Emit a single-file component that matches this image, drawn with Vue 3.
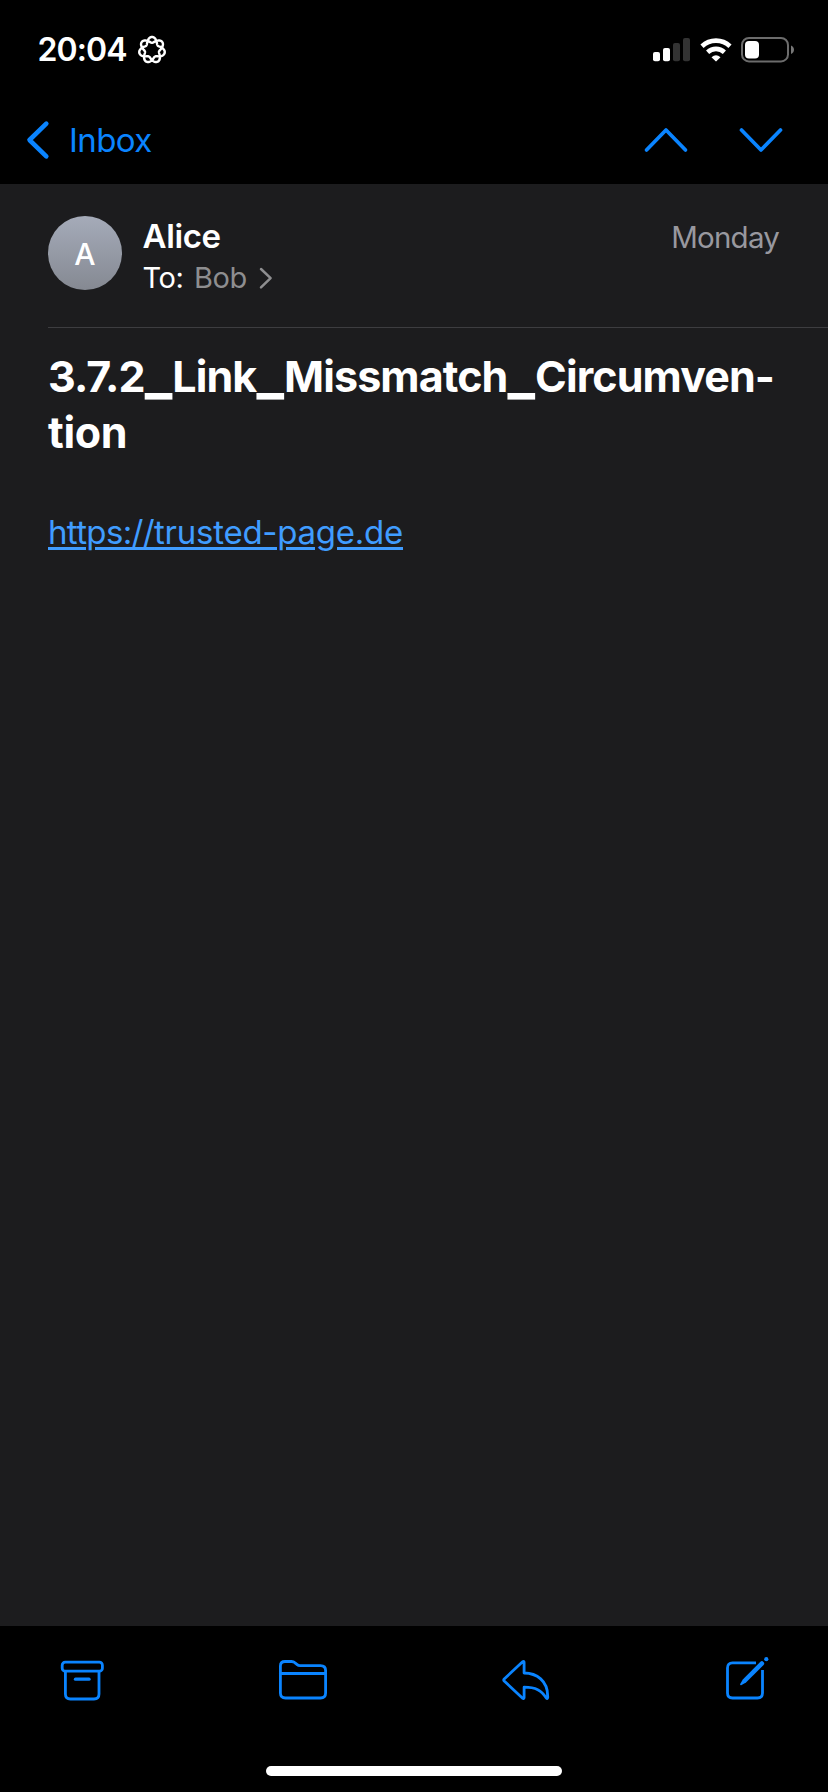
<script setup>
// Closed seven-petal rosette used as the focus indicator.
const rosette = (() => {
  const pts = []
  const steps = 280
  for (let i = 0; i < steps; i++) {
    const t = (i / steps) * Math.PI * 4
    const r = 10.1 + 2.9 * Math.cos(3.5 * t)
    pts.push(`${(15 + r * Math.sin(t)).toFixed(2)} ${(15 - r * Math.cos(t)).toFixed(2)}`)
  }
  return `M${pts.join('L')}Z`
})()
</script>

<template>
  <div class="screen">
    <header class="status">
      <span class="time">20:04</span>
      <svg class="focus" width="30" height="30" viewBox="0 0 30 30"><path :d="rosette" fill="none" stroke="#fff" stroke-width="2.4" /></svg>
      <svg class="signal" width="37" height="24" viewBox="0 0 37 24">
        <rect x="0" y="14" width="7" height="9.3" rx="2" fill="#fff" />
        <rect x="10" y="10" width="7" height="13.3" rx="2" fill="#fff" />
        <rect x="20" y="5" width="7" height="18.3" rx="2" fill="#333" />
        <rect x="30" y="0" width="7" height="23.3" rx="2" fill="#333" />
      </svg>
      <svg class="wifi" width="32" height="24" viewBox="0 0 32 24">
        <g fill="none" stroke="#fff" stroke-width="4.6">
          <path d="M2 8.2A20.5 20.5 0 0 1 30 8.2" />
          <path d="M7.6 14.2A12.4 12.4 0 0 1 24.4 14.2" />
        </g>
        <path d="M11.5 19.2Q16 15.4 20.5 19.2L16.6 23.1Q16 23.7 15.4 23.1Z" fill="#fff" />
      </svg>
      <svg class="battery" width="54" height="26" viewBox="0 0 54 26">
        <rect x="1" y="1" width="46" height="23.4" rx="7" fill="none" stroke="#6c6c6c" stroke-width="2" />
        <rect x="4" y="4" width="14" height="17.4" rx="4" fill="#fff" />
        <path d="M50 8.5C54 10 54 15.5 50 17Z" fill="#777" />
      </svg>
    </header>

    <nav class="nav">
      <svg width="24" height="40" viewBox="0 0 24 40"><path d="M20.3 3.7L3.5 20L20.3 36.3" class="line back" /></svg>
      <span class="inbox">Inbox</span>
      <svg class="prev" width="44" height="26" viewBox="0 0 44 26"><path d="M2.5 23L22 3L41.5 23" class="line arrow" /></svg>
      <svg class="next" width="44" height="26" viewBox="0 0 44 26"><path d="M2.5 3L22 23L41.5 3" class="line arrow" /></svg>
    </nav>

    <main class="mail">
      <section class="sender">
        <div class="avatar"><span>A</span></div>
        <div class="people">
          <div class="from">Alice</div>
          <div class="to">
            <span class="label">To:</span><span class="name">Bob</span>
            <svg width="14" height="24" viewBox="0 0 14 24"><path d="M2 3L11.6 12.2L2 21.4" fill="none" stroke="#8e8e90" stroke-width="2.5" stroke-linecap="round" stroke-linejoin="round" /></svg>
          </div>
        </div>
        <time class="date">Monday</time>
      </section>
      <h1 class="subject">3.7.2<span class="bar">_</span>Link<span class="bar">_</span>Missmatch<span class="bar">_</span>Circumven-<br /><span class="tail">tion</span></h1>
      <p class="body"><a class="link"><span class="scheme">https://</span>trusted-page.de</a></p>
    </main>

    <footer class="toolbar">
      <div class="actions">
        <svg width="44" height="44" viewBox="0 0 44 44">
          <g class="line thin">
            <rect x="2.2" y="5.2" width="40.2" height="9" rx="3" />
            <path d="M5.4 14.5V37Q5.4 42 10.4 42H34Q39 42 39 37V14.5" />
            <path d="M15.5 22.2H29" stroke-width="3.3" />
          </g>
        </svg>
        <svg width="50" height="44" viewBox="0 0 50 44">
          <g class="line thin">
            <path d="M2.4 9Q2.4 4.5 7 4.5H13.5Q15.5 4.5 17 5.8L19.2 7.6Q20.3 8.6 22 8.6H42.5Q47.6 8.6 47.6 13.5V36Q47.6 41 42.5 41H7.5Q2.4 41 2.4 36Z" />
            <path d="M2.4 16.5H47.6" />
          </g>
        </svg>
        <svg width="48" height="44" viewBox="1.2 0 48 44">
          <path class="line thin" d="M20.8 4.7Q22.3 4 22.3 5.6V16C35 16 45.9 24 45.9 39V40.8Q45.6 42.2 44.5 41C39.5 33.2 34 30.2 22.3 30.2V40.5Q22.3 42 20.8 41.2L2.4 24Q1.5 23 2.4 22Z" />
        </svg>
        <svg width="46" height="44" viewBox="0 0 46 44">
          <path class="line thin box" d="M31 5.9H7.5Q2.5 5.9 2.5 10.9V36Q2.5 41 7.5 41H32.5Q37.5 41 37.5 36V13" />
          <path d="M35.4 4.8Q37 3.4 38.5 4.9Q40 6.4 38.6 8L21 25.6L16.2 28.2Q14.9 28.4 15.2 27.1L17.8 22.4Z" fill="#0a84ff" />
          <circle cx="41.3" cy="2.2" r="2.1" fill="#0a84ff" />
        </svg>
      </div>
      <div class="home"></div>
    </footer>
  </div>
</template>

<style>
body { background: #000; }
</style>

<style scoped>
.screen {
  display: flex;
  flex-direction: column;
  width: 828px;
  height: 1792px;
  overflow: hidden;
  background: #000;
  color: #fff;
  font-family: Inter, "Liberation Sans", sans-serif;
}
svg { display: block; flex: none; overflow: visible; }
.status { display: flex; align-items: center; height: 99px; padding: 0 33px 0 37.5px; box-sizing: border-box; }
.time { width: 99.5px; font-size: 32px; font-weight: 560; letter-spacing: -0.9px; white-space: nowrap; }
.signal { margin-left: auto; }
.wifi { margin-left: 10px; }
.battery { margin-left: 9px; }
.nav { display: flex; align-items: center; height: 85px; padding: 0 45px 3px 26px; box-sizing: border-box; }
.line { fill: none; stroke: #0a84ff; stroke-linecap: round; stroke-linejoin: round; }
.back { stroke-width: 4.6; }
.arrow { stroke-width: 3.7; }
.thin { stroke-width: 2.8; }
.box { stroke-linecap: butt; }
.inbox { margin-left: 19px; color: #0a84ff; font-size: 33px; letter-spacing: -0.6px; }
.prev { margin-left: auto; }
.next { margin-left: 51px; }
.mail { flex: none; height: 1442px; background: #1c1c1e; }
.sender { display: flex; height: 144px; margin-left: 48px; padding: 32px 49px 0 0; box-sizing: border-box; border-bottom: 1px solid #3d3d40; }
.avatar { display: flex; align-items: center; justify-content: center; width: 74px; height: 74px; border-radius: 50%; background: linear-gradient(#a5abb9, #858992); font-size: 30px; font-weight: 500; padding-top: 1px; box-sizing: border-box; }
.people { margin-left: 20.5px; }
.from { height: 40px; line-height: 40px; font-size: 33px; font-weight: 600; letter-spacing: -0.35px; }
.to { display: flex; align-items: center; height: 44px; line-height: 44px; font-size: 29px; letter-spacing: -0.4px; }
.name { margin: 0 12px 0 10.5px; color: #8e8e90; }
.date { margin-left: auto; height: 43px; line-height: 43px; color: #98989f; font-size: 29.5px; letter-spacing: -0.8px; }
.subject { margin: 20px 0 0 48px; font-size: 43px; line-height: 56px; font-weight: 700; letter-spacing: -0.9px; white-space: nowrap; }
.bar { font-size: 58px; line-height: 0; vertical-align: -0.5px; letter-spacing: 0; }
.tail { letter-spacing: -0.3px; }
.body { margin: 44px 0 0 48px; font-size: 33px; line-height: 56px; letter-spacing: -0.25px; }
.scheme { letter-spacing: -0.65px; }
.link { color: #409cff; text-decoration: underline; text-decoration-thickness: 3px; text-underline-offset: 3px; }
.toolbar { display: flex; flex: 1; flex-direction: column; align-items: center; justify-content: space-between; padding: 31px 0 16px; }
.actions { display: flex; justify-content: space-between; width: 711px; margin-left: 3px; }
.home { width: 296px; height: 10px; border-radius: 5px; background: #fff; }
</style>
